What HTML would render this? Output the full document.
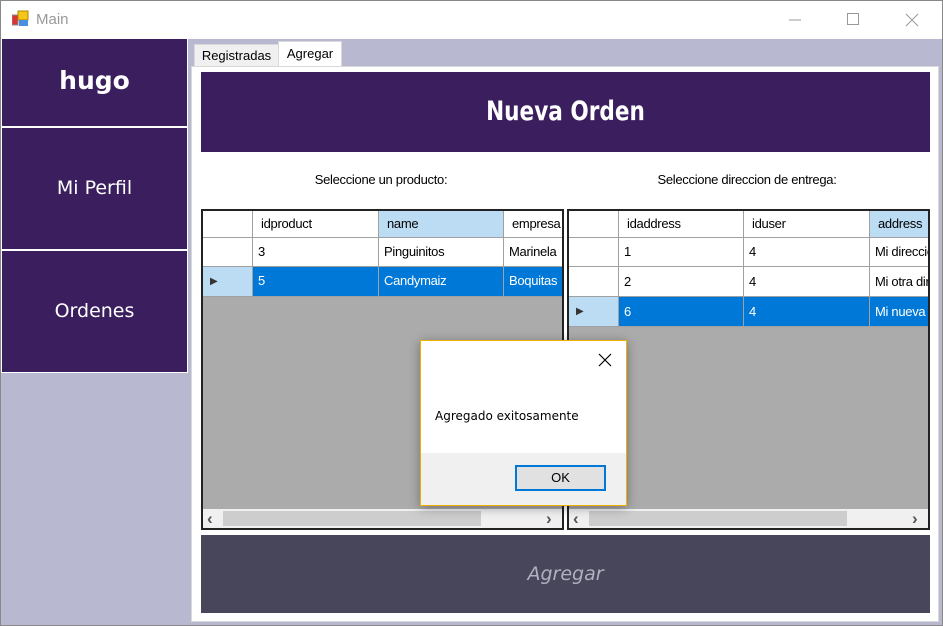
<!DOCTYPE html>
<html><head><meta charset="utf-8"><style>
*{margin:0;padding:0;box-sizing:border-box}
body{width:943px;height:626px;overflow:hidden;background:#fff;font-family:"Liberation Sans",sans-serif;position:relative}
.a{position:absolute}
.cell{position:absolute;font-size:13px;color:#000;padding-left:5px;line-height:28px;border-right:1px solid #a0a0a0;border-bottom:1px solid #a0a0a0;overflow:hidden;white-space:nowrap;letter-spacing:-0.3px}
.hd{background:#fff;line-height:26px}
.hs{background:#bcdcf4}
.sel{background:#0078d7;color:#fff}
.rh{background:#fff}
.rhs{background:#bcdcf4}
.side{position:absolute;left:1px;width:187px;background:#3a1e5e;border:1px solid #fff;color:#fff;text-align:center;font-family:"Comic Sans MS","DejaVu Sans",cursive;font-size:19px}
.arr{position:absolute;top:298px;font-size:17px;line-height:19px;color:#555;font-weight:bold}
</style></head><body>
<div class="a" style="left:0;top:0;width:943px;height:626px;border:1px solid #888;background:#b8b8d0"></div>
<div class="a" style="left:1px;top:1px;width:941px;height:38px;background:#fff"></div>
<svg class="a" style="left:12px;top:10px" width="18" height="18"><rect x="0" y="5" width="6" height="10" fill="#d33" stroke="#888"/><rect x="6" y="1" width="10" height="9" fill="#f5c518" stroke="#a80"/><rect x="7" y="10" width="9" height="6" fill="#4a8ee0"/></svg>
<div class="a" style="left:36px;top:11px;font-size:15px;color:#999">Main</div>
<svg class="a" style="left:780px;top:10px" width="150" height="20"><line x1="9" y1="10" x2="21" y2="10" stroke="#999"/><rect x="67.5" y="3.5" width="11" height="11" fill="none" stroke="#999"/><path d="M126 4L138 16M138 4L126 16" stroke="#999"/></svg>

<div class="side" style="top:39px;height:88px;line-height:84px;font-family:'DejaVu Sans',sans-serif;font-weight:bold;font-size:25px;border-top:none">hugo</div>
<div class="side" style="top:127px;height:123px;line-height:120px">Mi Perfil</div>
<div class="side" style="top:250px;height:123px;line-height:120px">Ordenes</div>

<div class="a" style="left:194px;top:44px;width:85px;height:23px;background:#f0f0f0;border:1px solid #d9d9d9;font-size:13px;line-height:22px;text-align:center">Registradas</div>
<div class="a" style="left:278px;top:41px;width:64px;height:27px;background:#fff;border:1px solid #d9d9d9;border-bottom:none;font-size:13px;line-height:24px;text-align:center">Agregar</div>
<div class="a" style="left:191px;top:66px;width:748px;height:556px;background:#fff;border:1px solid #d9d9d9"></div>

<div class="a" style="left:201px;top:72px;width:729px;height:80px;background:#3a1e5e"></div>
<div class="a" style="left:201px;top:72px;width:729px;height:80px;color:#fff;text-align:center;line-height:80px;font-family:'DejaVu Sans',sans-serif;font-weight:bold;font-size:27px;transform:scaleX(0.8);transform-origin:center">Nueva Orden</div>
<div class="a" style="left:281px;top:172px;width:200px;text-align:center;font-size:13px;letter-spacing:-0.3px">Seleccione un producto:</div>
<div class="a" style="left:627px;top:172px;width:240px;text-align:center;font-size:13px;letter-spacing:-0.3px">Seleccione direccion de entrega:</div>

<!-- grid 1 -->
<div class="a" style="left:201px;top:209px;width:363px;height:321px;background:#ababab;border:2px solid #222;overflow:hidden">
 <div class="cell hd rh" style="left:0;top:0;width:50px;height:27px"></div>
 <div class="cell hd" style="left:50px;top:0;width:126px;height:27px;padding-left:8px">idproduct</div>
 <div class="cell hd hs" style="left:176px;top:0;width:125px;height:27px;padding-left:8px">name</div>
 <div class="cell hd" style="left:301px;top:0;width:70px;height:27px;padding-left:8px">empresa</div>
 <div class="cell rh" style="left:0;top:27px;width:50px;height:29px"></div>
 <div class="cell" style="left:50px;top:27px;width:126px;height:29px;background:#fff">3</div>
 <div class="cell" style="left:176px;top:27px;width:125px;height:29px;background:#fff">Pinguinitos</div>
 <div class="cell" style="left:301px;top:27px;width:70px;height:29px;background:#fff">Marinela</div>
 <div class="cell rhs" style="left:0;top:56px;width:50px;height:30px;line-height:30px;padding-left:7px;font-size:10px;color:#333">&#9654;</div>
 <div class="cell sel" style="left:50px;top:56px;width:126px;height:30px">5</div>
 <div class="cell sel" style="left:176px;top:56px;width:125px;height:30px">Candymaiz</div>
 <div class="cell sel" style="left:301px;top:56px;width:70px;height:30px">Boquitas</div>
 <div class="a" style="left:0;top:298px;width:359px;height:19px;background:#f0f0f0"></div>
 <div class="a" style="left:20px;top:300px;width:258px;height:15px;background:#cdcdcd"></div>
 <div class="arr" style="left:4px">&lsaquo;</div>
 <div class="arr" style="left:343px">&rsaquo;</div>
</div>
<!-- grid 2 -->
<div class="a" style="left:567px;top:209px;width:363px;height:321px;background:#ababab;border:2px solid #222;overflow:hidden">
 <div class="cell hd rh" style="left:0;top:0;width:50px;height:27px"></div>
 <div class="cell hd" style="left:50px;top:0;width:125px;height:27px;padding-left:8px">idaddress</div>
 <div class="cell hd" style="left:175px;top:0;width:126px;height:27px;padding-left:8px">iduser</div>
 <div class="cell hd hs" style="left:301px;top:0;width:70px;height:27px;padding-left:8px">address</div>
 <div class="cell rh" style="left:0;top:27px;width:50px;height:29px"></div>
 <div class="cell" style="left:50px;top:27px;width:125px;height:29px;background:#fff">1</div>
 <div class="cell" style="left:175px;top:27px;width:126px;height:29px;background:#fff">4</div>
 <div class="cell" style="left:301px;top:27px;width:70px;height:29px;background:#fff">Mi direccion</div>
 <div class="cell rh" style="left:0;top:56px;width:50px;height:30px"></div>
 <div class="cell" style="left:50px;top:56px;width:125px;height:30px;background:#fff;line-height:30px">2</div>
 <div class="cell" style="left:175px;top:56px;width:126px;height:30px;background:#fff;line-height:30px">4</div>
 <div class="cell" style="left:301px;top:56px;width:70px;height:30px;background:#fff;line-height:30px">Mi otra direccion</div>
 <div class="cell rhs" style="left:0;top:86px;width:50px;height:30px;line-height:30px;padding-left:7px;font-size:10px;color:#333">&#9654;</div>
 <div class="cell sel" style="left:50px;top:86px;width:125px;height:30px;line-height:30px">6</div>
 <div class="cell sel" style="left:175px;top:86px;width:126px;height:30px;line-height:30px">4</div>
 <div class="cell sel" style="left:301px;top:86px;width:70px;height:30px;line-height:30px">Mi nueva dir</div>
 <div class="a" style="left:0;top:298px;width:359px;height:19px;background:#f0f0f0"></div>
 <div class="a" style="left:20px;top:300px;width:258px;height:15px;background:#cdcdcd"></div>
 <div class="arr" style="left:4px">&lsaquo;</div>
 <div class="arr" style="left:343px">&rsaquo;</div>
</div>

<div class="a" style="left:201px;top:535px;width:729px;height:78px;background:#48465a;color:#b0b0c0;text-align:center;line-height:78px;font-family:'Comic Sans MS','DejaVu Sans',cursive;font-style:italic;font-size:19px">Agregar</div>

<!-- dialog -->
<div class="a" style="left:420px;top:340px;width:207px;height:166px;background:#fff;border:1px solid #f0b000;box-shadow:0 2px 10px rgba(0,0,0,.35)">
 <svg class="a" style="left:177px;top:12px" width="14" height="14"><path d="M1 1L13 13M13 1L1 13" stroke="#000" stroke-width="1.2"/></svg>
 <div class="a" style="left:14px;top:68px;font-family:'DejaVu Sans',sans-serif;font-size:12px;color:#000">Agregado exitosamente</div>
 <div class="a" style="left:0;top:112px;width:205px;height:52px;background:#f0f0f0"></div>
 <div class="a" style="left:94px;top:124px;width:91px;height:26px;background:#e1e1e1;border:2px solid #0078d7;font-size:13px;text-align:center;line-height:22px">OK</div>
</div>
</body></html>
